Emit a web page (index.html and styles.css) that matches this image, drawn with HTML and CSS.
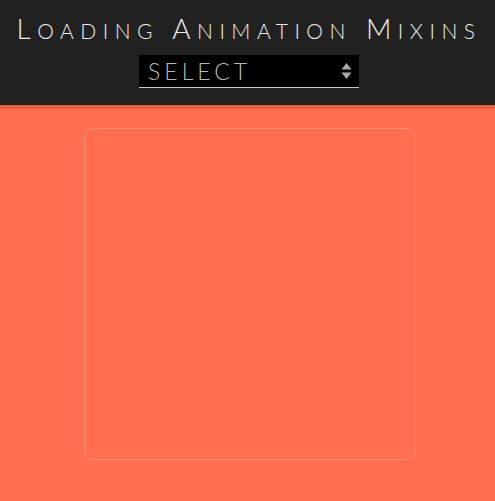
FILE: index.html
```html
<!DOCTYPE html>
<html>
<head>
<meta charset="utf-8">
<link rel="stylesheet" href="styles.css">
</head>
<body>
<header class="top">
  <h1 class="title">L<span class="sc">oading</span> A<span class="sc">nimation</span> M<span class="sc">ixins</span></h1>
  <div class="select">
    <span class="select-label">Select</span>
    <svg class="select-arrows" width="11" height="18" viewBox="0 0 11 18"><polygon points="5.5,1 10.5,7.5 0.5,7.5" fill="#aaa"/><polygon points="5.5,17 10.5,10.5 0.5,10.5" fill="#aaa"/></svg>
  </div>
</header>
<main class="stage">
  <div class="box"></div>
</main>
</body>
</html>
```
FILE: styles.css
```css
html, body {
  margin: 0;
  padding: 0;
  background: #ff6e4f;
  height: 100%;
}
body {
  font-family: "Lato", "Open Sans", sans-serif;
}
.top {
  background: #212121;
  height: 105px;
  border-bottom: 4px solid #e6623f;
  display: flex;
  flex-direction: column;
  align-items: center;
  padding-left: 3px;
  box-sizing: content-box;
}
.title {
  margin: 11px 0 0;
  height: 34px;
  font-size: 28px;
  font-weight: 300;
  text-transform: uppercase;
  letter-spacing: 6.5px;
  color: #ececec;
  line-height: 34px;
  white-space: nowrap;
}
.sc {
  font-size: 21px;
  line-height: 1;
}
.select {
  margin-top: 10px;
  width: 220px;
  height: 33px;
  background: #000;
  border-bottom: 1px solid #c8c8c8;
  display: flex;
  align-items: center;
  justify-content: space-between;
  padding: 0 7px 0 9px;
  box-sizing: border-box;
}
.select-label {
  font-size: 23px;
  font-weight: 300;
  text-transform: uppercase;
  letter-spacing: 4px;
  color: #b8b8b8;
  line-height: 1;
}
.select-arrows {
  display: block;
}
.stage {
  display: flex;
  justify-content: center;
  padding-left: 5px;
  padding-top: 19px;
}
.box {
  width: 330px;
  height: 330px;
  border: 1px solid rgba(255, 255, 255, 0.2);
  border-radius: 10px;
}
```
